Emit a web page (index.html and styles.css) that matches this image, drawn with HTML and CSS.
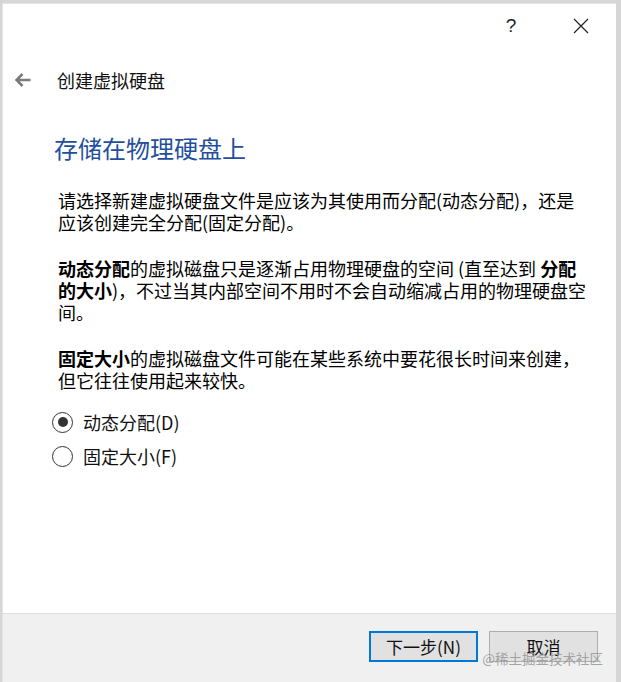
FILE: index.html
```html
<!DOCTYPE html>
<html>
<head lang="zh-CN">
    <meta charset="UTF-8">
    <title>创建虚拟硬盘</title>
    <link rel="stylesheet" href="styles.css">
</head>
<body>
<div class="window">
    <div class="titlebar">
        <span class="tb-btn help">?</span>
        <span class="tb-btn close">
            <svg width="16" height="16" viewBox="0 0 16 16">
                <path d="M1 1 L15 15 M15 1 L1 15" stroke="#222" stroke-width="1.2" fill="none"/>
            </svg>
        </span>
    </div>

    <div class="nav">
        <span class="back">
            <svg width="16" height="14" viewBox="0 0 16 14">
                <path d="M7.5 1 L1.5 7 L7.5 13 M1.5 7 L15.5 7" stroke="#7b7b7b" stroke-width="2.6" fill="none"/>
            </svg>
        </span>
        <span class="nav-title">创建虚拟硬盘</span>
    </div>

    <div class="content">
        <h1>存储在物理硬盘上</h1>
        <p>请选择新建虚拟硬盘文件是应该为其使用而分配(动态分配)，还是应该创建完全分配(固定分配)。</p>
        <p><b>动态分配</b>的虚拟磁盘只是逐渐占用物理硬盘的空间 (直至达到 <b>分配的大小</b>)，不过当其内部空间不用时不会自动缩减占用的物理硬盘空间。</p>
        <p><b>固定大小</b>的虚拟磁盘文件可能在某些系统中要花很长时间来创建，但它往往使用起来较快。</p>

        <ul class="radios">
            <li><span class="radio checked"></span>动态分配(D)</li>
            <li><span class="radio"></span>固定大小(F)</li>
        </ul>
    </div>

    <div class="footer">
        <span class="btn primary">下一步(N)</span>
        <span class="btn">取消</span>
        <span class="watermark">@稀土掘金技术社区</span>
    </div>
</div>
</body>
</html>
```

FILE: styles.css
```css
* {
    padding: 0;
    margin: 0;
    list-style: none;
    box-sizing: border-box;
}
html, body {
    height: 100%;
    overflow: hidden;
}
body {
    background-color: #d6d6d6;
    font-family: "Noto Sans CJK SC", "Liberation Sans", sans-serif;
    color: #000;
}
.window {
    margin: 3px 0 0 2px;
    width: 614px;
    height: 679px;
    background-color: #fff;
    border-top: 1px solid #e4e4e4;
    border-left: 1px solid #e4e4e4;
    display: flex;
    flex-direction: column;
}
.titlebar {
    height: 43px;
    display: flex;
    justify-content: flex-end;
    flex-shrink: 0;
}
.tb-btn {
    width: 70px;
    display: flex;
    align-items: center;
    justify-content: center;
}
.help {
    font-family: "Liberation Sans", sans-serif;
    font-size: 19px;
    color: #222;
    font-weight: 300;
}
.nav {
    height: 66px;
    display: flex;
    align-items: center;
    flex-shrink: 0;
}
.back {
    width: 54px;
    padding-left: 12px;
    display: flex;
    align-items: center;
}
.nav-title {
    font-size: 18px;
    color: #111;
}
.content {
    flex: 1;
    padding-left: 51px;
}
h1 {
    font-size: 24px;
    font-weight: normal;
    line-height: 32px;
    color: #1f4f9e;
    margin-top: 19px;
}
p {
    width: 530px;
    margin-left: 4px;
    font-size: 18px;
    line-height: 22px;
    margin-top: 24px;
}
h1 + p {
    margin-top: 25px;
}
.radios {
    margin-top: 14px;
}
.radios li {
    height: 34px;
    display: flex;
    align-items: center;
    font-size: 18px;
    color: #111;
}
.radio {
    width: 21px;
    height: 21px;
    border: 1.5px solid #333;
    border-radius: 50%;
    margin-left: -2px;
    margin-right: 10px;
    display: flex;
    align-items: center;
    justify-content: center;
}
.radio.checked::after {
    content: "";
    width: 10px;
    height: 10px;
    border-radius: 50%;
    background-color: #333;
}
.footer {
    height: 69px;
    flex-shrink: 0;
    background-color: #f0f0f0;
    border-top: 1px solid #dfdfdf;
    display: flex;
    justify-content: flex-end;
    align-items: flex-start;
    gap: 11px;
    padding: 17px 18px 0 0;
    position: relative;
}
.btn {
    width: 109px;
    height: 31px;
    background-color: #e1e1e1;
    border: 1px solid #adadad;
    display: flex;
    align-items: center;
    justify-content: center;
    font-size: 17px;
    color: #111;
}
.btn.primary {
    border: 2px solid #0078d7;
}
.watermark {
    position: absolute;
    right: 13px;
    top: 34px;
    font-size: 13.5px;
    color: rgba(150, 150, 150, 0.85);
}
```
